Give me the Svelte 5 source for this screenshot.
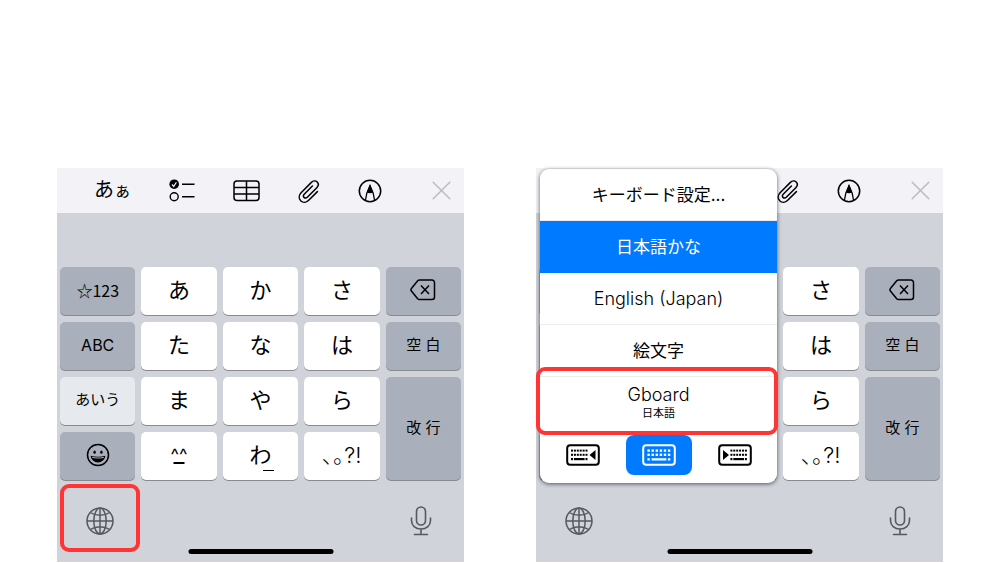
<script lang="ts">
/**
 * Two steps of switching the iOS keyboard:
 * 1. the globe key is marked
 * 2. the language menu is open and the Gboard entry is marked
 */

type Key = {
	label: string;
	kind?: 'dark' | 'pale';
	icon?: 'delete' | 'emoji';
	tall?: boolean;
	under?: 'middle' | 'right';
	size?: 'small' | 'star' | 'word' | 'marks' | 'latin';
};

const keys: Key[] = [
	{ label: '☆123', kind: 'dark', size: 'star' },
	{ label: 'あ' },
	{ label: 'か' },
	{ label: 'さ' },
	{ label: '削除', kind: 'dark', icon: 'delete' },
	{ label: 'ABC', kind: 'dark', size: 'small' },
	{ label: 'た' },
	{ label: 'な' },
	{ label: 'は' },
	{ label: '空 白', kind: 'dark', size: 'word' },
	{ label: 'あいう', kind: 'pale', size: 'word' },
	{ label: 'ま' },
	{ label: 'や' },
	{ label: 'ら' },
	{ label: '改 行', kind: 'dark', size: 'word', tall: true },
	{ label: '絵文字', kind: 'dark', icon: 'emoji' },
	{ label: '^^', under: 'middle', size: 'marks' },
	{ label: 'わ', under: 'right' },
	{ label: '､｡?!', size: 'latin' }
];

const languages = [
	{ name: 'キーボード設定...' },
	{ name: '日本語かな' },
	{ name: 'English (Japan)', latin: true },
	{ name: '絵文字' }
];
let selected = $state('日本語かな');
let side = $state('center');

// Small key caps inside the keyboard icons
const caps = [0, 1, 2, 3, 4, 5];
</script>

{#snippet keyboardIcon(place: string)}
	<svg width="34" height="22" viewBox="0 0 34 22" fill="none">
		<rect x="1.2" y="1.2" width="31.6" height="19.6" rx="3" stroke="currentColor" stroke-width="2" />
		{#if place === 'center'}
			{#each caps as c}
				<rect x={5.4 + c * 4.1} y="5.4" width="2.4" height="2.4" fill="currentColor" />
				<rect x={5.4 + c * 4.1} y="9.6" width="2.4" height="2.4" fill="currentColor" />
			{/each}
			<path d="M5.4 14.2h2.4v2.4H5.4zM9.6 14.2h14.8v2.4H9.6zM25.9 14.2h2.4v2.4h-2.4z" fill="currentColor" />
		{:else}
			{@const start = place === 'left' ? 5 : 12.4}
			{#each caps as c}
				<rect x={start + c * 2.9} y="5.6" width="2" height="2" fill="currentColor" />
				<rect x={start + c * 2.9} y="9.8" width="2" height="2" fill="currentColor" />
			{/each}
			<rect x={start} y="14" width="2" height="2.2" fill="currentColor" />
			<rect x={start + 2.9} y="14" width="10.7" height="2.2" fill="currentColor" />
			<rect x={start + 14.5} y="14" width="2" height="2.2" fill="currentColor" />
			{#if place === 'left'}
				<path d="M29.5 6v10L23.5 11z" fill="currentColor" />
			{:else}
				<path d="M5 6v10l6-5z" fill="currentColor" />
			{/if}
		{/if}
	</svg>
{/snippet}

{#snippet toolbar()}
	<div class="toolbar">
		<button type="button" class="kana">あ<small>ぁ</small></button>
		<button type="button" aria-label="チェックリスト">
			<svg width="26" height="24" viewBox="0 0 26 24" fill="none" stroke="currentColor">
				<circle cx="5.2" cy="5.2" r="4.8" fill="currentColor" stroke="none" />
				<path d="M3 5.5l1.7 1.9L7.4 3.2" stroke="#f2f2f7" stroke-width="1.2" />
				<circle cx="5.2" cy="17.8" r="4" stroke-width="1.4" />
				<path d="M13 5.2h12.5M13 17.8h12.5" stroke-width="1.5" />
			</svg>
		</button>
		<button type="button" aria-label="表">
			<svg width="27" height="22" viewBox="0 0 27 22" fill="none" stroke="currentColor" stroke-width="1.5">
				<rect x="1" y="1" width="25" height="19.5" rx="3" />
				<path d="M1 7.5h25M1 14h25M13.5 1v19.5" />
			</svg>
		</button>
		<button type="button" aria-label="添付">
			<svg width="22" height="24" viewBox="0 0 22 24" fill="none" stroke="currentColor" stroke-width="1.5" stroke-linecap="round">
				<path d="M19.4 12.6l-8.7 8.7c-2.4 2.4-5.8 2.5-8 .4-2.1-2.2-2-5.6.4-8L13.4 3.4c1.7-1.7 4.2-1.9 5.8-.4 1.5 1.6 1.3 4-.4 5.7l-9.5 9.5c-1 1-2.4 1.1-3.3.2-.9-.9-.8-2.2.2-3.2l8.2-8.2" />
			</svg>
		</button>
		<button type="button" aria-label="マークアップ">
			<svg width="24" height="24" viewBox="0 0 24 24" fill="none" stroke="currentColor" stroke-width="1.5">
				<circle cx="12" cy="12" r="10.7" />
				<path d="M7.4 21.5c.5-5 2.2-10.5 4.6-15 2.4 4.500 4.100 10 4.600 15" stroke-width="1.3" />
				<path d="M12 5.5L8.8 13.5c2 .9 4.4.9 6.4 0z" fill="currentColor" stroke="none" />
			</svg>
		</button>
		<button type="button" class="close" aria-label="閉じる">
			<svg width="19" height="19" viewBox="0 0 19 19" stroke="currentColor" stroke-width="1.5" stroke-linecap="round">
				<path d="M1.2 1.2l16.6 16.6M17.8 1.2L1.2 17.8" />
			</svg>
		</button>
	</div>
{/snippet}

{#snippet keypad()}
	<div class="keypad">
		{#each keys as key}
			<button
				type="button"
				class={['key', key.kind, key.size, key.tall && 'tall']}
				aria-label={key.icon ? key.label : undefined}
			>
				{#if key.icon === 'delete'}
					<svg width="26" height="22" viewBox="0 0 26 22" fill="none" stroke="currentColor" stroke-width="1.5" stroke-linejoin="round">
						<path d="M9.5 1H22a2.5 2.5 0 0 1 2.5 2.5V18a2.5 2.5 0 0 1-2.5 2.5H9.5a2.5 2.5 0 0 1-1.8-.8L1.8 12.5a2.5 2.5 0 0 1 0-3.500L7.7 1.800A2.500 2.500 0 0 1 9.500 1z" />
						<path d="M11 6.500l8 8.500M19 6.500L11 15" />
					</svg>
				{:else if key.icon === 'emoji'}
					<svg width="24" height="24" viewBox="0 0 24 24" fill="none">
						<circle cx="12" cy="12" r="10.5" stroke="currentColor" stroke-width="1.5" />
						<ellipse cx="8.6" cy="9.2" rx="1.2" ry="1.6" fill="currentColor" />
						<ellipse cx="15.4" cy="9.2" rx="1.2" ry="1.6" fill="currentColor" />
						<path d="M4.6 12.8c4.8 1.3 10 1.3 14.8 0-.5 4-3.6 6.6-7.4 6.6s-6.9-2.6-7.4-6.6z" fill="currentColor" />
						<path d="M6.2 14.4c3.8.8 7.8.8 11.6 0" stroke="#a9afbb" stroke-width="1" />
					</svg>
				{:else if key.under}
					<span class="glyph {key.under}">{key.label}</span>
				{:else}
					{key.label}
				{/if}
			</button>
		{/each}
	</div>
{/snippet}

{#snippet bottomBar(marked: boolean)}
	<div class="bottom">
		<button type="button" class="round" aria-label="次のキーボード">
			<svg width="28" height="28" viewBox="0 0 28 28" fill="none" stroke="currentColor" stroke-width="1.5">
				<circle cx="14" cy="14" r="13" />
				<ellipse cx="14" cy="14" rx="6.2" ry="13" />
				<path d="M1 14h26M14 1v26M4.3 5.5c5.6 3.8 13.8 3.8 19.4 0M4.3 22.5c5.6-3.8 13.8-3.8 19.4 0" />
			</svg>
		</button>
		<button type="button" class="round" aria-label="音声入力">
			<svg width="22" height="30" viewBox="0 0 22 30" fill="none" stroke="currentColor" stroke-width="1.6" stroke-linecap="round">
				<rect x="6.5" y="1" width="9" height="18" rx="4.5" />
				<path d="M1.5 12v2.5c0 5 4 8.5 9.5 8.5s9.5-3.5 9.5-8.5V12M11 23v5.500M4.500 28.500h13" />
			</svg>
		</button>
		<div class="home"></div>
		{#if marked}
			<div class="marker globe-marker"></div>
		{/if}
	</div>
{/snippet}

{#snippet menu()}
	<div class="menu">
		{#each languages as language}
			<button
				type="button"
				class="language"
				class:latin={language.latin}
				class:selected={selected === language.name}
				onclick={() => (selected = language.name)}
			>
				{language.name}
			</button>
		{/each}
		<button type="button" class="language latin gboard">
			Gboard
			<small>日本語</small>
		</button>
		<div class="sides">
			{#each ['left', 'center', 'right'] as place}
				<button
					type="button"
					class="side"
					class:selected={side === place}
					aria-label={place}
					onclick={() => (side = place)}
				>
					{@render keyboardIcon(place)}
				</button>
			{/each}
		</div>
		<div class="marker menu-marker"></div>
	</div>
{/snippet}

<main class="steps">
	{#each [false, true] as menuOpen}
		<section class="screen">
			{@render toolbar()}
			{@render keypad()}
			{@render bottomBar(!menuOpen)}
			{#if menuOpen}
				{@render menu()}
			{/if}
		</section>
	{/each}
</main>

<style>
	:global(body) {
		background: #fff;
	}

	.steps {
		display: grid;
		grid-template-columns: 1fr 1fr;
		gap: 72px;
		padding: 168px 57px 0;
		font-family: Inter, 'Noto Sans CJK JP', sans-serif;
		color: #000;
	}

	button {
		margin: 0;
		padding: 0;
		border: none;
		background: none;
		color: inherit;
		font: inherit;
		cursor: pointer;
	}

	svg {
		display: block;
	}

	.screen {
		position: relative;
		background: #d0d3da;
	}

	/* Notes toolbar */
	.toolbar {
		display: flex;
		align-items: center;
		gap: 38px;
		height: 45px;
		padding: 0 13px 0 37px;
		background: #f2f2f7;
	}

	.kana {
		font-size: 20px;
		line-height: 24px;
		white-space: nowrap;
	}

	.kana small {
		font-size: 17px;
	}

	.close {
		margin-left: auto;
		color: #bcbcc0;
	}

	/* Keys */
	.keypad {
		display: grid;
		grid-template-columns: repeat(5, 1fr);
		grid-auto-rows: 48px;
		gap: 7px 6px;
		padding: 54px 3px 0;
	}

	.key {
		display: flex;
		align-items: center;
		justify-content: center;
		padding-bottom: 2px;
		border-radius: 5px;
		background: #fff;
		box-shadow: 0 1px 0 #898a8d;
		font-size: 22px;
		line-height: 28px;
	}

	.dark {
		background: #a9afbb;
	}

	.pale {
		background: #e6e9ed;
	}

	.small,
	.star {
		font-size: 16px;
	}

	.star {
		font-family: 'Noto Sans CJK JP', sans-serif;
	}

	.word {
		font-size: 15px;
	}

	.marks {
		font-size: 18px;
	}

	.latin {
		font-weight: 300;
	}

	.tall {
		grid-row: span 2;
	}

	/* Short bar below the kaomoji and the わ key */
	.glyph {
		position: relative;
	}

	.glyph::after {
		content: '';
		position: absolute;
		width: 11px;
		height: 2px;
		background: currentColor;
	}

	.middle::after {
		bottom: 5px;
		left: 50%;
		transform: translateX(-50%);
	}

	.right::after {
		right: -2px;
		bottom: -2px;
		height: 1px;
	}

	/* Globe, microphone and home indicator */
	.bottom {
		position: relative;
		display: flex;
		align-items: center;
		justify-content: space-between;
		height: 82px;
		padding: 0 3px;
	}

	.round {
		display: flex;
		justify-content: center;
		width: 80px;
		color: #555960;
	}

	.home {
		position: absolute;
		bottom: 8px;
		left: 50%;
		width: 145px;
		height: 5px;
		border-radius: 3px;
		background: #000;
		transform: translateX(-50%);
	}

	.marker {
		position: absolute;
		box-sizing: border-box;
		border: 4px solid #ff3535;
		border-radius: 9px;
		pointer-events: none;
	}

	.globe-marker {
		top: 4px;
		left: 3px;
		width: 80px;
		height: 68px;
	}

	/* Language menu */
	.menu {
		position: absolute;
		top: 1px;
		left: 4px;
		display: flex;
		flex-direction: column;
		width: 237px;
		border-radius: 9px;
		background: #fff;
		box-shadow: 0 1px 4px rgba(0, 0, 0, 0.6);
	}

	.language {
		box-sizing: border-box;
		height: 52px;
		border-bottom: 1px solid #ececee;
		font-size: 17px;
		line-height: 22px;
	}

	.language.selected {
		border-color: #007aff;
		background: #007aff;
		color: #fff;
	}

	.language.latin {
		font-size: 18px;
	}

	.language.gboard {
		display: flex;
		flex-direction: column;
		align-items: center;
		height: 58px;
		padding-top: 7px;
		border-bottom: none;
	}

	.gboard small {
		font-size: 11px;
		font-weight: 400;
		line-height: 14px;
	}

	.sides {
		display: flex;
		justify-content: center;
		gap: 10px;
		padding-bottom: 8px;
	}

	.side {
		display: flex;
		align-items: center;
		justify-content: center;
		width: 66px;
		height: 40px;
		border-radius: 8px;
	}

	.side.selected {
		background: #007aff;
		color: #fff;
	}

	.menu-marker {
		right: -1px;
		bottom: 48px;
		left: -4px;
		height: 68px;
	}
</style>
